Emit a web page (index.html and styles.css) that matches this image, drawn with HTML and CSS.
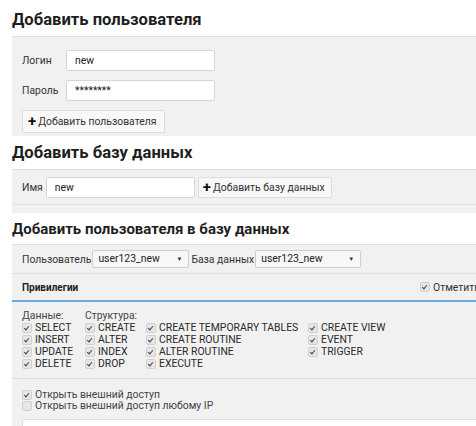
FILE: index.html
```html
<!DOCTYPE html>
<html lang="ru">
  <head>
    <meta charset="UTF-8" />
    <title>Пользователи и базы данных</title>
    <link rel="stylesheet" href="styles.css">
  </head>
  <body>
    <div class="page">
      <h1 class="title">Добавить пользователя</h1>
      <div class="panel panel-user">
        <div class="field">
          <label class="label" for="login">Логин</label>
          <input class="text" type="text" id="login" value="new" />
        </div>
        <div class="field">
          <label class="label" for="pass">Пароль</label>
          <input class="text" type="text" id="pass" value="********" />
        </div>
        <button class="btn"><span class="plus">+</span>Добавить пользователя</button>
      </div>

      <h1 class="title title-db">Добавить базу данных</h1>
      <div class="panel panel-db">
        <div class="db-row">
          <label class="label-inline" for="dbname">Имя</label>
          <input class="text" type="text" id="dbname" value="new" />
          <button class="btn"><span class="plus">+</span>Добавить базу данных</button>
        </div>
      </div>

      <h2 class="subtitle">Добавить пользователя в базу данных</h2>
      <div class="panel panel-grant">
        <div class="grant-row">
          <span class="label-inline">Пользователь</span>
          <div class="select">user123_new<span class="arrow">▼</span></div>
          <span class="label-inline">База данных</span>
          <div class="select select-db">user123_new<span class="arrow">▼</span></div>
        </div>
        <div class="priv-head">
          <b class="priv-title">Привилегии</b>
          <label class="check-all"><span class="box on"></span>Отметить все</label>
        </div>
        <div class="priv-grid">
          <div class="col col-1">
            <div class="col-title">Данные:</div>
            <div class="item"><span class="box on"></span>SELECT</div>
            <div class="item"><span class="box on"></span>INSERT</div>
            <div class="item"><span class="box on"></span>UPDATE</div>
            <div class="item"><span class="box on"></span>DELETE</div>
          </div>
          <div class="col col-2">
            <div class="col-title">Структура:</div>
            <div class="item"><span class="box on"></span>CREATE</div>
            <div class="item"><span class="box on"></span>ALTER</div>
            <div class="item"><span class="box on"></span>INDEX</div>
            <div class="item"><span class="box on"></span>DROP</div>
          </div>
          <div class="col col-3">
            <div class="col-title">&nbsp;</div>
            <div class="item"><span class="box on"></span>CREATE TEMPORARY TABLES</div>
            <div class="item"><span class="box on"></span>CREATE ROUTINE</div>
            <div class="item"><span class="box on"></span>ALTER ROUTINE</div>
            <div class="item"><span class="box on"></span>EXECUTE</div>
          </div>
          <div class="col">
            <div class="col-title">&nbsp;</div>
            <div class="item"><span class="box on"></span>CREATE VIEW</div>
            <div class="item"><span class="box on"></span>EVENT</div>
            <div class="item"><span class="box on"></span>TRIGGER</div>
          </div>
        </div>
        <div class="access">
          <div class="item"><span class="box on"></span>Открыть внешний доступ</div>
          <div class="item"><span class="box"></span>Открыть внешний доступ любому IP</div>
          <div class="ip-box"></div>
        </div>
      </div>
    </div>
  </body>
</html>
```

FILE: styles.css
```css
body {
  margin: 0;
  font-family: Roboto, "Liberation Sans", sans-serif;
  color: #333;
  background: #fff;
  overflow: hidden;
}
.page {
  width: 600px;
  padding-left: 12px;
}
.title {
  margin: 0;
  height: 36px;
  line-height: 40px;
  font-size: 16.6px;
  font-weight: bold;
  color: #1e1e1e;
}
.title-db {
  height: 33px;
  line-height: 34px;
}
.subtitle {
  margin: 0;
  height: 31px;
  line-height: 33px;
  font-size: 15px;
  font-weight: bold;
  color: #1e1e1e;
}
.panel {
  background: #f1f1f1;
  border-top: 1px solid #e0e0e0;
}
.panel-user {
  padding: 13px 10px 3px;
}
.field {
  display: flex;
  align-items: center;
  margin-bottom: 9px;
}
.label {
  width: 44px;
  font-size: 10.4px;
}
.text {
  width: 149px;
  height: 21px;
  box-sizing: border-box;
  border: 1px solid #d6d6d6;
  border-radius: 2px;
  padding: 0 8px;
  font-family: Roboto, "Liberation Sans", sans-serif;
  font-size: 10.4px;
  color: #222;
  background: #fff;
}
.btn {
  display: flex;
  align-items: center;
  height: 23px;
  padding: 0 7px 0 5px;
  background: #f8f8f8;
  border: 1px solid #dcdcdc;
  border-radius: 2px;
  font-family: Roboto, "Liberation Sans", sans-serif;
  font-size: 10.4px;
  color: #333;
}
.plus {
  font-size: 15px;
  font-weight: bold;
  color: #111;
  margin-right: 2px;
  line-height: 1;
}
.panel-db {
  height: 43px;
  padding: 0 10px;
}
.db-row {
  display: flex;
  align-items: center;
  height: 34px;
  border-bottom: 1px solid #e2e2e2;
  margin: 0 -10px;
  padding: 0 10px;
}
.db-row .text {
  margin: 0 3px 0 3px;
}
.db-row .btn {
  height: 21px;
  padding: 0 6px 0 4px;
}
.label-inline {
  font-size: 10.4px;
}
.panel-grant {
  padding: 0;
}
.grant-row {
  display: flex;
  align-items: center;
  gap: 1px;
  height: 28px;
  padding: 0 10px;
  border-bottom: 1px solid #e2e2e2;
}
.select {
  position: relative;
  width: 97px;
  height: 18px;
  box-sizing: border-box;
  border: 1px solid #cfcfcf;
  border-radius: 2px;
  background: #f7f7f7;
  font-size: 10.4px;
  line-height: 16px;
  padding-left: 5px;
  margin-right: 1px;
  color: #222;
}
.select-db {
  width: 106px;
}
.arrow {
  position: absolute;
  right: 6px;
  top: 0;
  font-size: 6px;
  color: #333;
}
.priv-head {
  display: flex;
  align-items: center;
  height: 26px;
  padding: 0 10px;
  font-size: 10px;
  color: #222;
  border-bottom: 2px solid #6aaee0;
}
.priv-title {
  width: 398px;
  flex: none;
}
.check-all {
  display: flex;
  align-items: center;
  font-size: 10.4px;
  color: #333;
  white-space: nowrap;
}
.priv-grid {
  display: flex;
  padding: 8px 10px 0;
  height: 68px;
  border-bottom: 1px solid #dcdcdc;
}
.col {
  font-size: 10.4px;
  line-height: 12px;
  color: #2a2a2a;
}
.col-1 {
  width: 63px;
}
.col-2 {
  width: 61px;
}
.col-3 {
  width: 162px;
}
.col-title {
  color: #444;
}
.item {
  display: flex;
  align-items: center;
  height: 12px;
  line-height: 12px;
  font-size: 10.4px;
  white-space: nowrap;
}
.box {
  width: 8px;
  height: 8px;
  border: 1px solid #d0d0d0;
  border-radius: 2px;
  background: #e6e6e6;
  margin-right: 3px;
  position: relative;
  flex-shrink: 0;
}
.box.on::after {
  content: "";
  position: absolute;
  left: 2px;
  top: 1px;
  width: 2px;
  height: 4px;
  border: solid #444;
  border-width: 0 1px 1px 0;
  transform: rotate(40deg);
}
.access {
  padding: 10px 10px 0;
  color: #444;
}
.access .item {
  height: 11px;
  line-height: 11px;
}
.ip-box {
  margin-top: 8px;
  height: 20px;
  background: #fff;
  border: 1px solid #dcdcdc;
  border-radius: 2px;
  width: 560px;
}
```
